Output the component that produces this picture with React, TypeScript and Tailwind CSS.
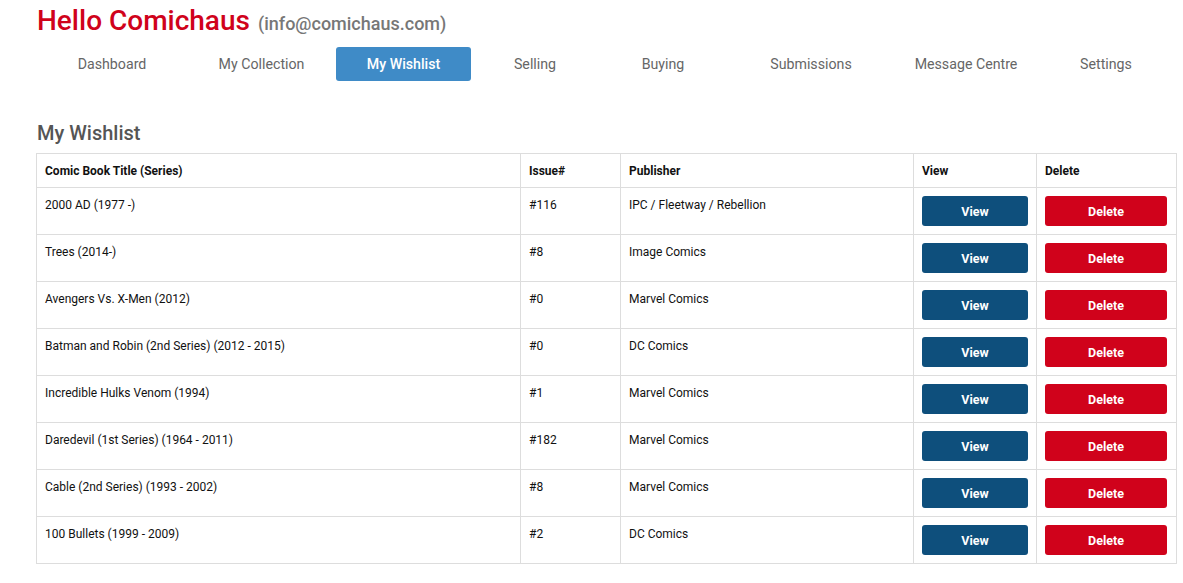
import React from 'react';

const navItems = [
  { label: 'Dashboard', w: 'w-[150px]' },
  { label: 'My Collection', w: 'w-[149px]' },
  { label: 'My Wishlist', w: 'w-[135px]', active: true },
  { label: 'Selling', w: 'w-[128px]' },
  { label: 'Buying', w: 'w-[128px]' },
  { label: 'Submissions', w: 'w-[168px]' },
  { label: 'Message Centre', w: 'w-[142px]' },
  { label: 'Settings', w: 'w-[138px]' },
];

const wishlist = [
  { title: '2000 AD (1977 -)', issue: '#116', publisher: 'IPC / Fleetway / Rebellion' },
  { title: 'Trees (2014-)', issue: '#8', publisher: 'Image Comics' },
  { title: 'Avengers Vs. X-Men (2012)', issue: '#0', publisher: 'Marvel Comics' },
  { title: 'Batman and Robin (2nd Series) (2012 - 2015)', issue: '#0', publisher: 'DC Comics' },
  { title: 'Incredible Hulks Venom (1994)', issue: '#1', publisher: 'Marvel Comics' },
  { title: 'Daredevil (1st Series) (1964 - 2011)', issue: '#182', publisher: 'Marvel Comics' },
  { title: 'Cable (2nd Series) (1993 - 2002)', issue: '#8', publisher: 'Marvel Comics' },
  { title: '100 Bullets (1999 - 2009)', issue: '#2', publisher: 'DC Comics' },
];

const cell = 'border border-[#dddddd] px-2 align-top text-left';
const textCell = `${cell} pt-[9px] pb-[7px]`;
const btnCell = `${cell} py-2`;

export default function App() {
  return (
    <div className="min-h-screen bg-white font-['Roboto',sans-serif] text-[#111] pl-[36px] pr-[7px]">
      <h1 className="flex items-baseline gap-[8px] pt-[3px] pl-px">
        <span className="text-[28px] font-medium leading-[36px] text-[#d0021b]">Hello Comichaus</span>
        <span className="text-[18px] font-medium text-[#777]">(info@comichaus.com)</span>
      </h1>

      <nav className="flex mt-[8px] pl-px">
        {navItems.map((item) => (
          <div key={item.label} className={`${item.w} flex justify-center`}>
            <span
              className={
                item.active
                  ? 'w-full h-[34px] pt-px rounded-[3px] bg-[#3f8bc7] text-white flex items-center justify-center text-[14.2px] font-medium'
                  : 'h-[34px] pt-[2px] flex items-center text-[14.2px] text-[#666]'
              }
            >
              {item.label}
            </span>
          </div>
        ))}
      </nav>

      <h2 className="mt-[38px] text-[20px] font-medium text-[#555] leading-[28px] pl-px">My Wishlist</h2>

      <table className="mt-[6px] w-[1141px] border-collapse text-[12px] leading-[17px]">
        <thead>
          <tr>
            <th className={`${textCell} w-[484px] font-bold`}>Comic Book Title (Series)</th>
            <th className={`${textCell} w-[100px] font-bold`}>Issue#</th>
            <th className={`${textCell} w-[293px] font-bold`}>Publisher</th>
            <th className={`${textCell} w-[123px] font-bold`}>View</th>
            <th className={`${textCell} w-[140px] font-bold`}>Delete</th>
          </tr>
        </thead>
        <tbody>
          {wishlist.map((row) => (
            <tr key={row.title}>
              <td className={textCell}>{row.title}</td>
              <td className={textCell}>{row.issue}</td>
              <td className={textCell}>{row.publisher}</td>
              <td className={btnCell}>
                <button className="w-[106px] h-[30px] rounded-[3px] bg-[#0e4f7c] text-white font-bold text-[12.5px]">
                  View
                </button>
              </td>
              <td className={btnCell}>
                <button className="w-[122px] h-[30px] rounded-[3px] bg-[#d0021b] text-white font-bold text-[12.5px]">
                  Delete
                </button>
              </td>
            </tr>
          ))}
        </tbody>
      </table>
    </div>
  );
}
